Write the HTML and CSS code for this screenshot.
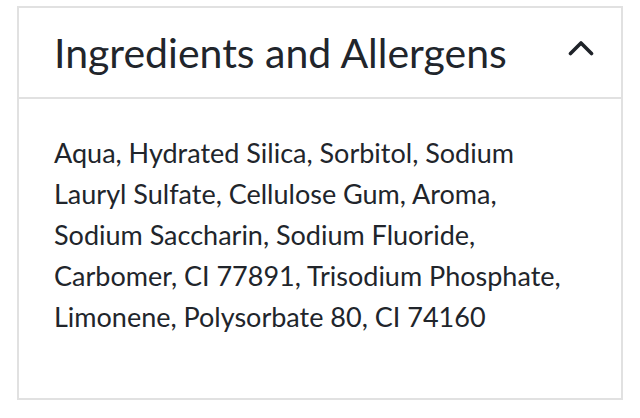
FILE: index.html
```html
<!DOCTYPE html>
<html>
<head>
<meta charset="utf-8">
<link rel="stylesheet" href="styles.css">
</head>
<body>
<section class="card">
  <header class="card-header">
    <h2 class="card-title">Ingredients and Allergens</h2>
    <svg class="chevron" width="26" height="16" viewBox="0 0 26 16"><path d="M2.5 13.5 L13 3 L23.5 13.5" fill="none" stroke="#1f2329" stroke-width="3.6" stroke-linecap="round" stroke-linejoin="round"/></svg>
  </header>
  <div class="card-body">
    <p class="ingredients">Aqua, Hydrated Silica, Sorbitol, Sodium Lauryl Sulfate, Cellulose Gum, Aroma, Sodium Saccharin, Sodium Fluoride, Carbomer, CI 77891, Trisodium Phosphate, Limonene, Polysorbate 80, CI 74160</p>
  </div>
</section>
</body>
</html>
```
FILE: styles.css
```css
html, body {
  margin: 0;
  padding: 0;
  background: #fff;
}
body {
  padding: 6px 17px 0 17px;
  font-family: Lato, "Open Sans", sans-serif;
  color: #21252b;
}
.card {
  width: 606px;
  height: 394px;
  box-sizing: border-box;
  border: 2px solid #e1e1e1;
  display: flex;
  flex-direction: column;
}
.card-header {
  height: 89px;
  border-bottom: 2px solid #e1e1e1;
  display: flex;
  align-items: center;
  justify-content: space-between;
  padding: 0 27px 0 35px;
  flex-shrink: 0;
}
.card-title {
  margin: 0;
  font-size: 41px;
  font-weight: 400;
  line-height: 1;
}
.chevron {
  display: block;
  margin-top: -9px;
}
.card-body {
  padding: 33px 45px 0 35px;
}
.ingredients {
  margin: 0;
  font-size: 27px;
  line-height: 41px;
}
```
